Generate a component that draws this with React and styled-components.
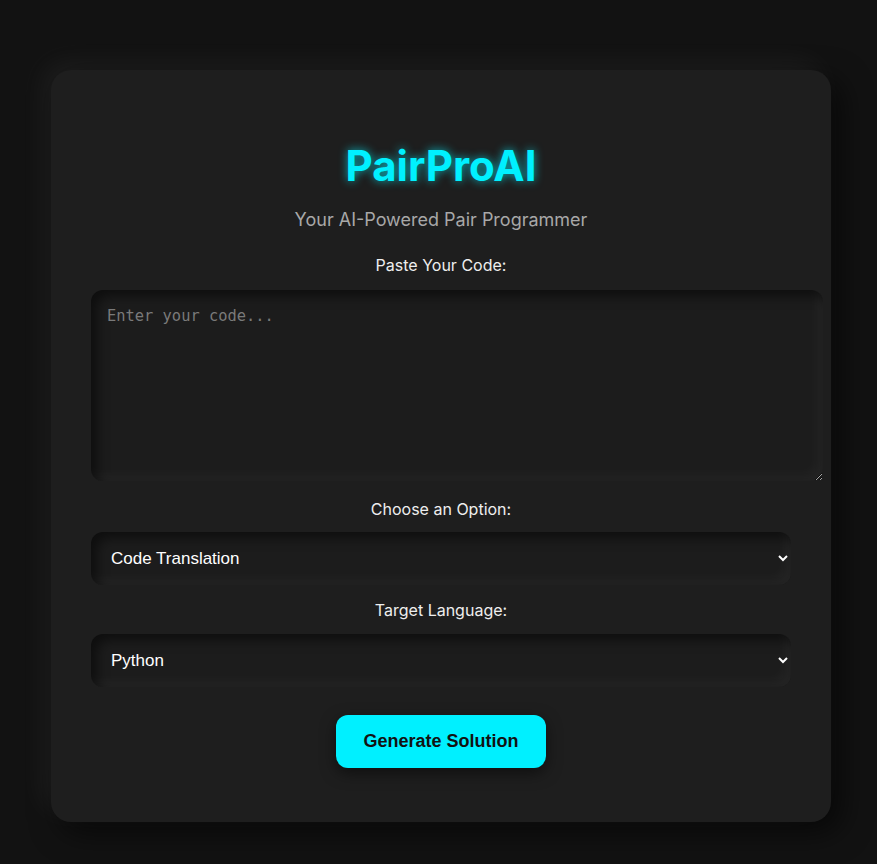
import styled, { createGlobalStyle } from "styled-components";

const GlobalStyle = createGlobalStyle`
  html, body {
    margin: 0;
    padding: 0;
    background: #121212;
    font-family: Inter, "Noto Sans", sans-serif;
  }
`;

const Page = styled.main`
  padding: 70px 0 42px 51px;
`;

const Card = styled.section`
  width: 700px;
  padding: 40px 40px 54px;
  background: #1e1e1e;
  border-radius: 20px;
  text-align: center;
  box-shadow: -10px -10px 30px rgba(255, 255, 255, 0.05),
    10px 10px 30px rgba(0, 0, 0, 0.6);
`;

const Title = styled.h1`
  margin: 30px 0 18px;
  font-size: 42px;
  line-height: 51px;
  font-weight: 700;
  color: #00f0ff;
  text-shadow: 0 0 10px rgba(0, 240, 255, 0.7);
`;

const Subtitle = styled.p`
  margin: 0 0 24px;
  font-size: 18px;
  line-height: 22px;
  color: #a8a8a8;
`;

const Label = styled.label`
  display: block;
  margin: ${({ $top }) => $top || 0}px 0 ${({ $bottom }) => $bottom || 14}px;
  font-size: 16px;
  line-height: 20px;
  font-weight: 400;
  color: #eeeeee;
`;

const CodeInput = styled.textarea`
  display: block;
  width: 100%;
  height: 159px;
  padding: 16px;
  border: none;
  border-radius: 12px;
  background: #1c1c1c;
  color: #e0e0e0;
  font-family: "DejaVu Sans Mono", monospace;
  font-size: 15.4px;
  line-height: 20px;
  outline: none;
  box-shadow: inset 6px 6px 12px rgba(0, 0, 0, 0.5),
    inset -6px -6px 12px rgba(255, 255, 255, 0.04);

  &::placeholder {
    color: #7a7a7a;
  }
`;

const Select = styled.select`
  display: block;
  width: 100%;
  height: 53px;
  padding: 0 12px 0 16px;
  border: none;
  border-radius: 12px;
  background: #1c1c1c;
  color: #ffffff;
  font-family: "Liberation Sans", Arial, sans-serif;
  font-size: 17px;
  outline: none;
  box-shadow: inset 6px 6px 12px rgba(0, 0, 0, 0.5),
    inset -6px -6px 12px rgba(255, 255, 255, 0.04);
`;

const Button = styled.button`
  margin-top: 28px;
  padding: 16px 27px;
  border: none;
  border-radius: 12px;
  background: #00f0ff;
  color: #121212;
  font-family: "Liberation Sans", Arial, sans-serif;
  font-size: 18px;
  line-height: 21px;
  font-weight: 700;
  cursor: pointer;
  box-shadow: 0 5px 15px rgba(0, 0, 0, 0.5);
`;

const App = () => {
  return (
    <>
      <GlobalStyle />
      <Page>
        <Card>
          <Title>PairProAI</Title>
          <Subtitle>Your AI-Powered Pair Programmer</Subtitle>

          <Label htmlFor="code" $bottom={15}>
            Paste Your Code:
          </Label>
          <CodeInput id="code" placeholder="Enter your code..." />

          <Label htmlFor="option" $top={18} $bottom={13}>
            Choose an Option:
          </Label>
          <Select id="option" defaultValue="translate">
            <option value="translate">Code Translation</option>
            <option value="debug">Debugging</option>
            <option value="explain">Code Explanation</option>
          </Select>

          <Label htmlFor="lang" $top={15}>
            Target Language:
          </Label>
          <Select id="lang" defaultValue="python">
            <option value="python">Python</option>
            <option value="javascript">JavaScript</option>
            <option value="java">Java</option>
          </Select>

          <Button>Generate Solution</Button>
        </Card>
      </Page>
    </>
  );
};

export default App;
